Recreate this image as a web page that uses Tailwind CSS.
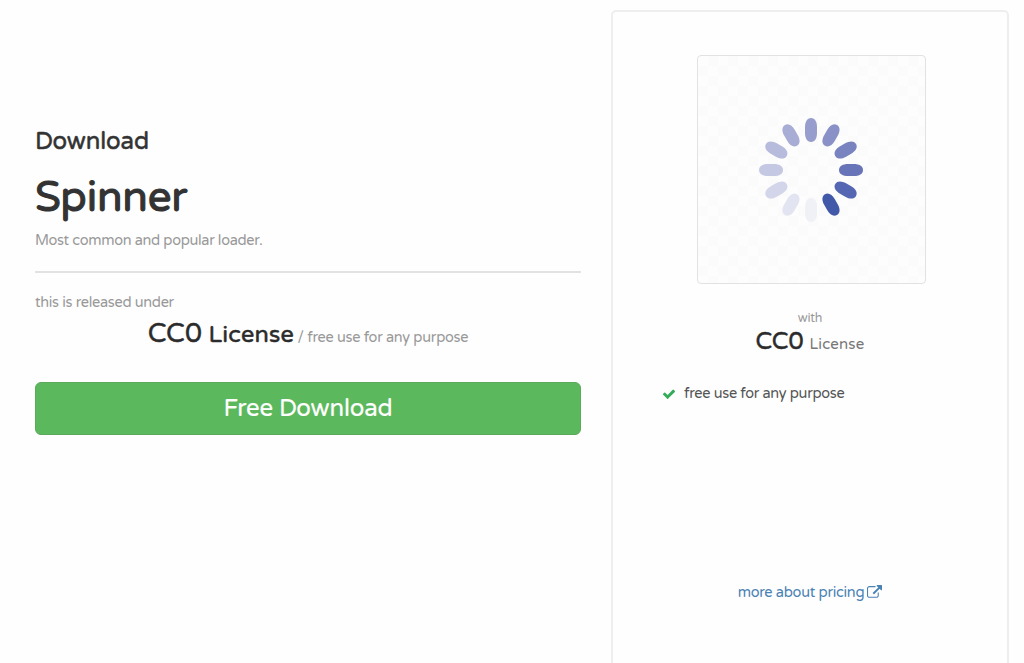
<!DOCTYPE html>
<html lang="en">
<head>
<title>Download Spinner</title>
<meta charset="UTF-8">
<meta name="viewport" content="width=device-width, initial-scale=1.0">
<script src="https://cdn.jsdelivr.net/npm/@tailwindcss/browser@4"></script>
</head>
<body class="bg-[#fefefe] font-['Varela_Round','Noto_Sans',sans-serif] text-[#333] overflow-hidden">

  <div class="flex h-[663px] pl-[35px] pt-[10px] gap-[30px] whitespace-nowrap">

    <!-- Item details -->
    <main class="w-[546px] pt-[117px]">
      <h2 class="text-[24px] leading-[30px] tracking-[-0.1px] [-webkit-text-stroke:0.5px_#333]">Download</h2>
      <h1 class="mt-[16px] text-[42px] leading-[50px] tracking-[-0.2px] [-webkit-text-stroke:1.1px_#333]">Spinner</h1>
      <p class="mt-[8px] text-[14.5px] leading-[20px] tracking-[-0.31px] text-[#999]">Most common and popular loader.</p>
      <hr class="mt-[20px] border-t-2 border-[#e2e2e2]">
      <p class="mt-[20px] text-[14.5px] leading-[20px] tracking-[-0.29px] text-[#999]">this is released under</p>
      <p class="mt-[2px] h-[38px] text-center leading-[38px] text-[14.5px] tracking-[-0.25px] text-[#999]">
        <span class="text-[27px] tracking-[0.1px] text-[#2b2b2b] [-webkit-text-stroke:0.5px_#2b2b2b]">CC0</span>
        <span class="ml-[3px] text-[23.5px] tracking-[0.2px] text-[#2b2b2b] [-webkit-text-stroke:0.5px_#2b2b2b]">License</span>
        <span>/ free use for any purpose</span>
      </p>
      <button class="mt-[29px] block w-full h-[53px] rounded-[6px] border border-[#5aa95c] bg-[#5cb85c] text-[24px] leading-[30px] tracking-[-0.15px] text-white [-webkit-text-stroke:0.2px_#fff]">Free Download</button>
    </main>

    <!-- Pricing card -->
    <aside class="w-[398px] h-[680px] shrink-0 rounded-[5px] border-2 border-[#eeeeee] pt-[43px] flex flex-col items-center">
      <div class="ml-[2px] size-[229px] rounded-[4px] border-[1.5px] border-[#e2e2e2] bg-[#fcfcfc] bg-[repeating-conic-gradient(#fbfbfb_0_25%,#fdfdfd_0_50%)] bg-size-[20px_20px]">
        <svg class="size-full" viewBox="-113 -114 227 227">
          <defs><path id="petal" d="M0 -52C4 -52 6 -48 6 -43V-37C6 -32 4 -28 0 -28S-6 -32 -6 -37V-43C-6 -48 -4 -52 0 -52z"/></defs>
          <use href="#petal" fill="#979dcd"/>
          <use href="#petal" fill="#8a91c7" transform="rotate(30)"/>
          <use href="#petal" fill="#7983c0" transform="rotate(60)"/>
          <use href="#petal" fill="#6874b8" transform="rotate(90)"/>
          <use href="#petal" fill="#5567b2" transform="rotate(120)"/>
          <use href="#petal" fill="#4258a9" transform="rotate(150)"/>
          <use href="#petal" fill="#eff1f6" transform="rotate(180)"/>
          <use href="#petal" fill="#e2e5f1" transform="rotate(210)"/>
          <use href="#petal" fill="#d3d6ea" transform="rotate(240)"/>
          <use href="#petal" fill="#c5c8e2" transform="rotate(270)"/>
          <use href="#petal" fill="#b7bbdc" transform="rotate(300)"/>
          <use href="#petal" fill="#a7add5" transform="rotate(330)"/>
        </svg>
      </div>
      <p class="mt-[25px] text-[12.5px] leading-[20px] tracking-[-0.25px] text-[#999]">with</p>
      <p class="h-[26px] leading-[26px] text-[15px] text-[#777]"><span class="mr-[2px] text-[24px] text-[#2b2b2b] [-webkit-text-stroke:0.5px_#2b2b2b]">CC0</span> <span class="tracking-[0.2px]">License</span></p>
      <ul class="mt-[29px] w-full pl-[49px]">
        <li class="flex items-center gap-[8px] text-[14.5px] leading-[20px] tracking-[-0.28px] text-[#555]">
          <svg class="w-[14px] h-[14px]" viewBox="0 0 1792 1792" fill="#35ab5c"><path d="M1671 566q0 40-28 68l-724 724-136 136q-28 28-68 28t-68-28l-136-136-362-362q-28-28-28-68t28-68l136-136q28-28 68-28t68 28l294 295 656-657q28-28 68-28t68 28l136 136q28 28 28 68z"/></svg>
          <span>free use for any purpose</span>
        </li>
      </ul>
      <a class="mt-[178px] flex items-center gap-[3px] text-[14.5px] leading-[22px] tracking-[-0.26px] text-[#4a82b4]" href="#">
        <span>more about pricing</span>
        <svg class="size-[15px] -mt-[2px]" viewBox="0 0 1792 1792" fill="currentColor"><path d="M1408 928v320q0 119-84.500 203.500t-203.500 84.500h-832q-119 0-203.500-84.500t-84.500-203.500v-832q0-119 84.500-203.500t203.500-84.500h704q14 0 23 9t9 23v64q0 14-9 23t-23 9h-704q-66 0-113 47t-47 113v832q0 66 47 113t113 47h832q66 0 113-47t47-113v-320q0-14 9-23t23-9h64q14 0 23 9t9 23zm384-864v512q0 26-19 45t-45 19-45-19l-176-176-652 652q-10 10-23 10t-23-10l-114-114q-10-10-10-23t10-23l652-652-176-176q-19-19-19-45t19-45 45-19h512q26 0 45 19t19 45z"/></svg>
      </a>
    </aside>

  </div>

</body>
</html>
